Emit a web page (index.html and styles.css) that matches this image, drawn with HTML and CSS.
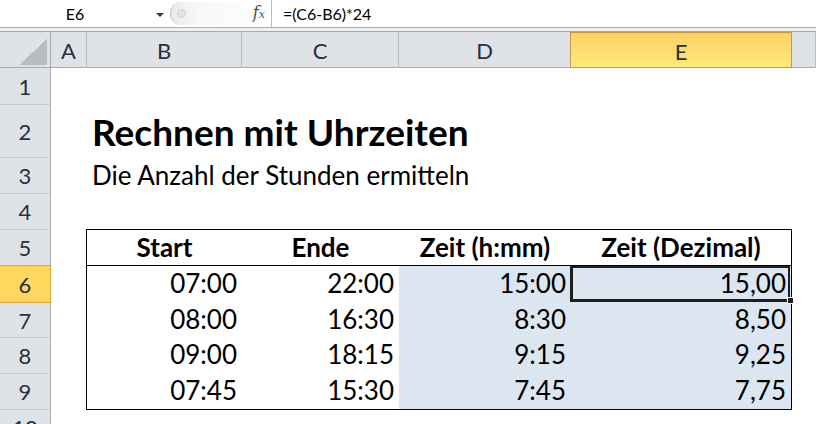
FILE: index.html
```html
<!DOCTYPE html>
<html>
<head>
  <meta charset="UTF-8">
  <title>Rechnen mit Uhrzeiten</title>
  <link rel="stylesheet" href="styles.css">
</head>
<body>
  <div class="formula-bar">
    <div class="name-box">E6</div>
    <span class="name-arrow"></span>
    <div class="fx-box">
      <span class="knob"></span>
      <span class="fx">f<small>x</small></span>
    </div>
    <div class="formula">=(C6-B6)*24</div>
  </div>
  <div class="bar-gap"></div>

  <div class="sheet">
    <div class="row head-row">
      <div class="corner"></div>
      <div class="ch">A</div>
      <div class="ch">B</div>
      <div class="ch">C</div>
      <div class="ch">D</div>
      <div class="ch ch-active">E</div>
      <div class="ch"></div>
    </div>

    <div class="row r1"><div class="rh">1</div></div>
    <div class="row r2">
      <div class="rh">2</div>
      <div class="cell"></div>
      <div class="cell title">Rechnen mit Uhrzeiten</div>
    </div>
    <div class="row r3">
      <div class="rh">3</div>
      <div class="cell"></div>
      <div class="cell subtitle">Die Anzahl der Stunden ermitteln</div>
    </div>
    <div class="row r4"><div class="rh">4</div></div>

    <div class="row r5">
      <div class="rh">5</div>
      <div class="cell"></div>
      <div class="cell th t-left">Start</div>
      <div class="cell th">Ende</div>
      <div class="cell th">Zeit (h:mm)</div>
      <div class="cell th t-right">Zeit (Dezimal)</div>
    </div>
    <div class="row r6">
      <div class="rh rh-active">6</div>
      <div class="cell"></div>
      <div class="cell num t-left">07:00</div>
      <div class="cell num">22:00</div>
      <div class="cell num shade">15:00</div>
      <div class="cell num shade t-right active-cell">15,00</div>
    </div>
    <div class="row r7">
      <div class="rh">7</div>
      <div class="cell"></div>
      <div class="cell num t-left">08:00</div>
      <div class="cell num">16:30</div>
      <div class="cell num shade">8:30</div>
      <div class="cell num shade t-right">8,50</div>
    </div>
    <div class="row r8">
      <div class="rh">8</div>
      <div class="cell"></div>
      <div class="cell num t-left">09:00</div>
      <div class="cell num">18:15</div>
      <div class="cell num shade">9:15</div>
      <div class="cell num shade t-right">9,25</div>
    </div>
    <div class="row r9 t-last">
      <div class="rh">9</div>
      <div class="cell"></div>
      <div class="cell num t-left">07:45</div>
      <div class="cell num">15:30</div>
      <div class="cell num shade">7:45</div>
      <div class="cell num shade t-right">7,75</div>
    </div>
    <div class="row r10"><div class="rh">10</div></div>
  </div>
</body>
</html>
```

FILE: styles.css
```css
html, body {
  margin: 0;
  height: 424px;
  overflow: hidden;
}

body {
  font-family: Lato, "Liberation Sans", sans-serif;
  color: #000;
  background: #fff;
}

/* Bearbeitungsleiste */
.formula-bar {
  display: flex;
  height: 27px;
  border-bottom: 1px solid #a9aeb4;
  font-size: 16px;
  line-height: 27px;
}

.name-box {
  width: 150px;
  text-align: center;
}

.name-arrow {
  width: 0;
  height: 0;
  margin: 13px 0 0 6px;
  border-left: 4px solid transparent;
  border-right: 4px solid transparent;
  border-top: 4px solid #3a3a3a;
}

.fx-box {
  display: flex;
  align-items: center;
  width: 100px;
  height: 23px;
  margin: 2px 0 0 6px;
  border-left: 1px solid #b9bdc2;
  border-radius: 12px 0 0 12px;
  background: linear-gradient(to right, #e9ebee, #f7f8f9 30%, #fff);
}

.knob {
  width: 7px;
  height: 7px;
  margin-left: 6px;
  border: 1px solid #cdd0d4;
  border-radius: 50%;
  background: #e2e4e7;
}

.fx {
  margin-left: auto;
  margin-right: 6px;
  font-family: "DejaVu Serif", "Liberation Serif", serif;
  font-style: italic;
  font-size: 16px;
  color: #4a4a4a;
}

.fx small {
  font-size: 11px;
}

.formula {
  flex: 1;
  padding-left: 11px;
  border-left: 1px solid #b9bdc2;
}

.bar-gap {
  height: 3px;
  background: #eef0f2;
  border-bottom: 1px solid #a5abb2;
}

/* Tabellenblatt */
.row {
  display: grid;
  grid-template-columns: 51px 36px 155px 157px 172px 221px 1fr;
  height: 36px;
}

.row > div {
  box-sizing: border-box;
}

.r1 { height: 37px; }
.r2 { height: 53px; }
.r6 { height: 37px; }
.r7 { height: 35px; }

.corner,
.ch,
.rh {
  display: flex;
  align-items: center;
  justify-content: center;
  background: #dfe3e8;
  color: #27303b;
  font-size: 22px;
}

.corner {
  border-right: 1px solid #a3aab2;
  border-bottom: 1px solid #a3aab2;
  background: #dfe3e8 linear-gradient(to bottom right, transparent 50%, #b9bdc2 50%) no-repeat right 3px bottom 2px / 28px 26px;
}

.ch {
  padding-top: 2px;
  border-right: 1px solid #b6bcc3;
  border-bottom: 1px solid #a3aab2;
}

.ch-active {
  margin-left: -1px;
  border: 1px solid #c7963f;
  background: linear-gradient(#fdd163, #ffe97c);
}

.rh {
  border-right: 1px solid #a3aab2;
  border-bottom: 1px solid #c6cad0;
}

.rh-active {
  margin-top: -1px;
  border: 1px solid #e2a33a;
  border-left: none;
  background: #ffd75f;
}

.cell {
  display: flex;
  align-items: flex-end;
  white-space: nowrap;
  font-size: 26px;
  line-height: 26px;
}

.title {
  padding: 0 0 8px 5px;
  font-size: 37px;
  line-height: 37px;
  font-weight: bold;
}

.subtitle {
  padding: 0 0 6px 5px;
}

/* Tabelle */
.th {
  justify-content: center;
  padding-bottom: 5px;
  font-weight: bold;
  border-bottom: 1px solid #000;
  box-shadow: 0 -1px 0 #000;
}

.th.t-left {
  box-shadow: 0 -1px 0 #000, -1px 0 0 #000, -1px -1px 0 #000;
}

.num {
  justify-content: flex-end;
  padding: 0 5px 7px 0;
}

.r7 .num { padding-bottom: 6px; }

.t-left {
  box-shadow: -1px 0 0 #000;
}

.t-right {
  border-right: 1px solid #000;
}

.t-last .cell:nth-child(n+3) {
  border-bottom: 1px solid #000;
  padding-bottom: 6px;
}

.shade {
  background: #dce6f1;
}

.active-cell {
  position: relative;
}

.active-cell::after {
  content: "";
  position: absolute;
  top: 0;
  left: -1px;
  right: 1px;
  bottom: 1px;
  border: 2px solid #1e1e1e;
  border-left-width: 3px;
  border-bottom-width: 3px;
}

.active-cell::before {
  content: "";
  position: absolute;
  right: -3px;
  bottom: -1px;
  z-index: 1;
  width: 5px;
  height: 5px;
  background: #1e1e1e;
  border: 1px solid #fff;
}
```
